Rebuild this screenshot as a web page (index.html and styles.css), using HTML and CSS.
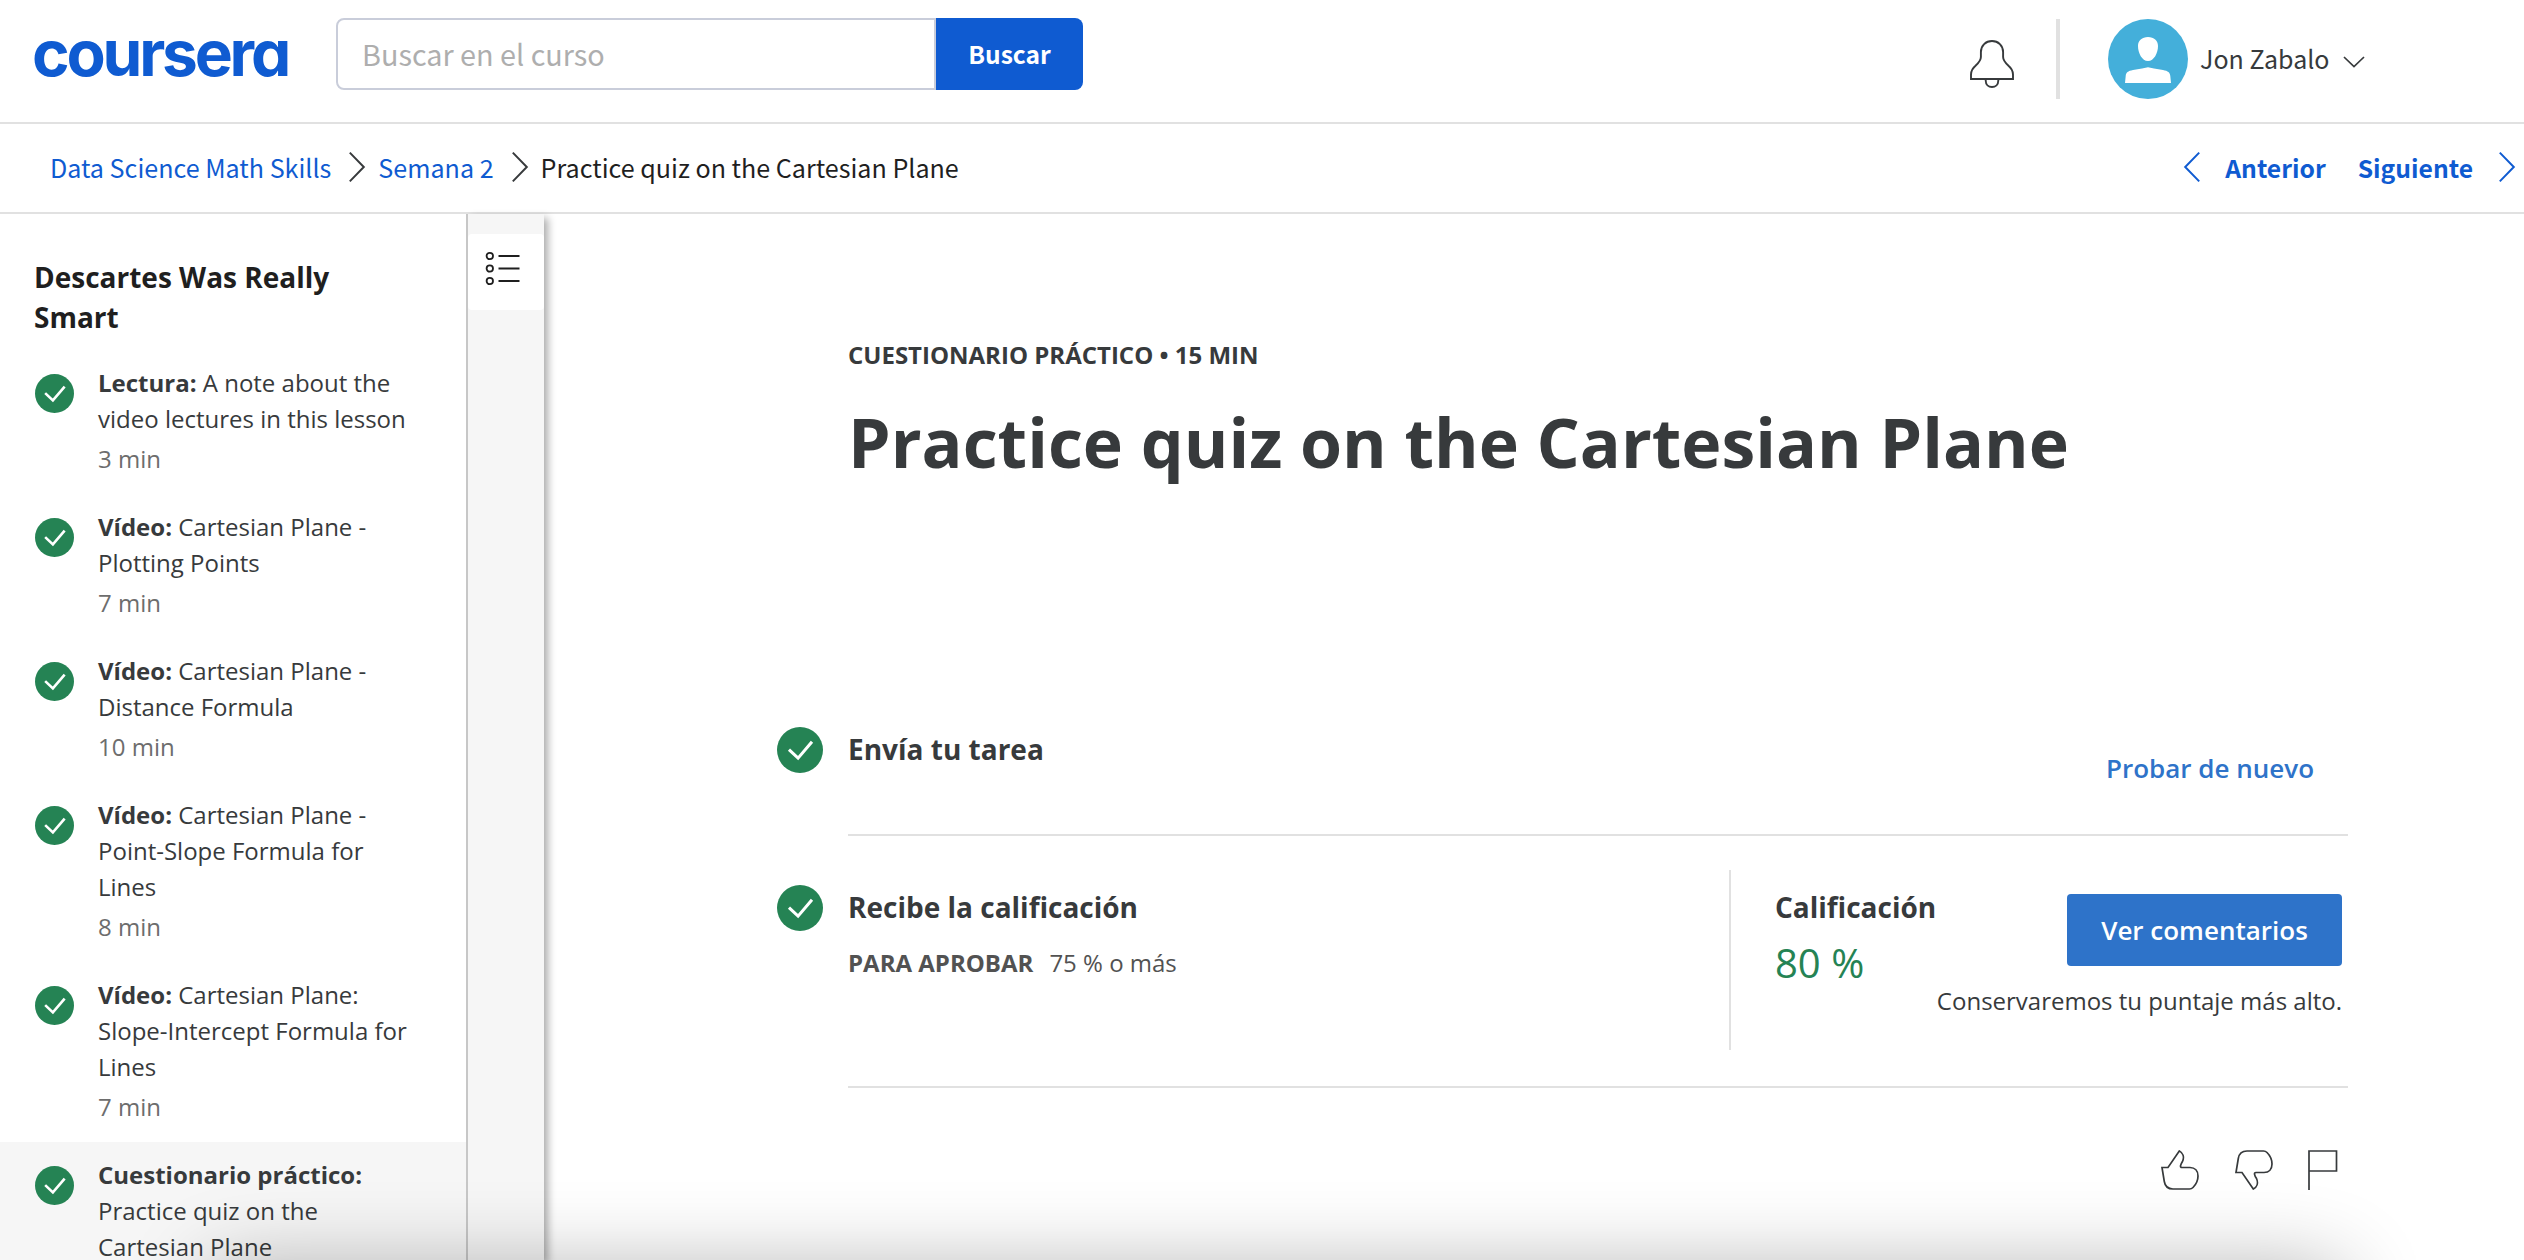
FILE: index.html
```html
<!DOCTYPE html>
<html lang="es">
<head>
<meta charset="utf-8">
<title>Practice quiz on the Cartesian Plane | Coursera</title>
<link rel="stylesheet" href="styles.css">
</head>
<body>
<svg class="defs" aria-hidden="true">
  <symbol id="check" viewBox="0 0 48 48">
    <circle cx="24" cy="24" r="24" fill="#258354"/>
    <path d="M12.500 23.500 L22 32.500 L36.500 15.500" fill="none" stroke="#fff" stroke-width="3.200"/>
  </symbol>
  <symbol id="chevron" viewBox="0 0 18 32">
    <path d="M1.8 1.6 L15.8 16 L1.8 30.4" fill="none" stroke="currentColor" stroke-width="2"/>
  </symbol>
</svg>
<div class="page">
  <header class="header">
    <a class="logo">coursera</a>
    <form class="search">
      <span class="search-input">Buscar en el curso</span>
      <span class="search-button">Buscar</span>
    </form>
    <div class="account">
      <svg class="bell" viewBox="0 0 44 48"><g fill="none" stroke="#373a3c" stroke-width="1.9"><path d="M1 39V34.500C1 30.500 3 28 5.500 25.800C8.500 23 10.900 20.500 10.900 17V12C10.900 5.500 15.800 1 22 1S33.100 5.500 33.100 12V17C33.100 20.500 35.500 23 38.500 25.800C41 28 43 30.500 43 34.500V39Z"/><path d="M15.700 39V40.500C15.700 44.500 18.500 47 22 47S28.300 44.500 28.300 40.500V39"/></g></svg>
      <span class="account-divider"></span>
      <svg class="avatar" viewBox="0 0 80 80"><circle cx="40" cy="40" r="40" fill="#44afda"/><path fill="#fff" d="M40 18c6 0 10 3.500 10 9 0 7-4 15-10 15s-10-8-10-15c0-5.500 4-9 10-9zM34 49.500l6-1.200 6 1.200 9 1.500c5 1 7 2.500 7.300 6l.7 7H17l.7-7c.3-3.500 2.300-5 7.300-6z"/></svg>
      <span class="user">Jon Zabalo</span>
      <svg class="caret" viewBox="0 0 22 12"><path d="M1 1l10 9.500L21 1" fill="none" stroke="#373a3c" stroke-width="1.700"/></svg>
    </div>
  </header>
  <nav class="crumbs">
    <a class="link">Data Science Math Skills</a>
    <svg class="chev"><use href="#chevron"/></svg>
    <a class="link">Semana 2</a>
    <svg class="chev"><use href="#chevron"/></svg>
    <span>Practice quiz on the Cartesian Plane</span>
    <div class="pager">
      <svg class="chev flip"><use href="#chevron"/></svg>
      <a class="prev">Anterior</a>
      <a class="next">Siguiente</a>
      <svg class="chev"><use href="#chevron"/></svg>
    </div>
  </nav>
  <div class="body">
    <aside class="sidebar">
      <h2 class="lesson">Descartes Was Really Smart</h2>
      <ul class="items">
        <li class="item"><svg class="done"><use href="#check"/></svg><div><p><b>Lectura:</b> A note about the video lectures in this lesson</p><p class="time">3 min</p></div></li>
        <li class="item"><svg class="done"><use href="#check"/></svg><div><p><b>Vídeo:</b> Cartesian Plane - Plotting Points</p><p class="time">7 min</p></div></li>
        <li class="item"><svg class="done"><use href="#check"/></svg><div><p><b>Vídeo:</b> Cartesian Plane - Distance Formula</p><p class="time">10 min</p></div></li>
        <li class="item"><svg class="done"><use href="#check"/></svg><div><p><b>Vídeo:</b> Cartesian Plane - Point-Slope Formula for Lines</p><p class="time">8 min</p></div></li>
        <li class="item"><svg class="done"><use href="#check"/></svg><div><p><b>Vídeo:</b> Cartesian Plane: Slope-Intercept Formula for Lines</p><p class="time">7 min</p></div></li>
        <li class="item current"><svg class="done"><use href="#check"/></svg><div><p><b>Cuestionario práctico:</b> Practice quiz on the Cartesian Plane</p></div></li>
      </ul>
    </aside>
    <div class="rail">
      <div class="rail-tab"><svg class="list-icon" viewBox="0 0 36 36"><g fill="none" stroke="#1f1f1f" stroke-width="1.800"><circle cx="4.800" cy="5" r="3.200"/><circle cx="4.800" cy="17.500" r="3.200"/><circle cx="4.800" cy="30" r="3.200"/><path d="M13.500 5h21M13.500 17.500h21M13.500 30h21"/></g></svg></div>
    </div>
    <main class="main">
      <p class="eyebrow">CUESTIONARIO PRÁCTICO • 15 MIN</p>
      <h1 class="title">Practice quiz on the Cartesian Plane</h1>
      <section class="step submit">
        <svg class="step-icon"><use href="#check"/></svg>
        <h3 class="step-title">Envía tu tarea</h3>
        <a class="retry">Probar de nuevo</a>
      </section>
      <section class="step grade">
        <svg class="step-icon"><use href="#check"/></svg>
        <div class="requirement">
          <h3 class="step-title">Recibe la calificación</h3>
          <p class="pass"><b>PARA APROBAR</b><span>75 % o más</span></p>
        </div>
        <div class="result">
          <div class="score">
            <h3 class="step-title">Calificación</h3>
            <p class="percent">80 %</p>
          </div>
          <div class="feedback">
            <a class="button">Ver comentarios</a>
            <p class="note">Conservaremos tu puntaje más alto.</p>
          </div>
        </div>
      </section>
      <div class="reactions">
        <svg class="thumb" viewBox="0 0 38 40"><path d="M1 17.500H7L18.300 1C22 3 23.500 7 21.500 11.500C19.500 14.500 18.500 17.500 21 17.500H29C34 17.500 37 21 37 26C37 31 34.500 35 32 37.500C31 38.500 30 39 28.500 39H12C7 39 4 36 3.300 31.500Z" fill="none" stroke="#373a3c" stroke-width="1.700"/></svg>
        <svg class="thumb" viewBox="0 0 38 40"><path d="M1 22.500H7L18.300 39C22 37 23.500 33 21.500 28.500C19.500 25.500 18.500 22.500 21 22.500H29C34 22.500 37 19 37 14C37 9 34.500 5 32 2.500C31 1.500 30 1 28.500 1H12C7 1 4 4 3.300 8.500Z" fill="none" stroke="#373a3c" stroke-width="1.700"/></svg>
        <svg class="flag" viewBox="0 0 30 40"><path d="M1 40V1H28.500V21H1" fill="none" stroke="#373a3c" stroke-width="1.700"/></svg>
      </div>
    </main>
  </div>
  <div class="bottom-shade"></div>
</div>
</body>
</html>
```
FILE: styles.css
```css
* { box-sizing: border-box; }
body { margin: 0; background: #fff; color: #373a3c; font-family: "Open Sans", sans-serif; font-size: 24px; line-height: 36px; }
h1, h2, h3, p, ul { margin: 0; padding: 0; }
svg { display: block; flex: none; }
.defs { position: absolute; width: 0; height: 0; }
.page { position: relative; width: 2524px; height: 1260px; overflow: hidden; display: flex; flex-direction: column; }

/* Top bar */
.header { height: 124px; flex: none; display: flex; align-items: flex-start; padding-left: 32px; border-bottom: 2px solid #e1e1e1; font-family: "Noto Sans CJK SC", sans-serif; }
.logo { width: 304px; padding-top: 17px; font: 700 64px/72px Inter, sans-serif; font-feature-settings: "cv11"; letter-spacing: -3.2px; color: #0f5bd1; }
.search { display: flex; margin-top: 18px; height: 72px; }
.search-input { width: 600px; border: 2px solid #c9cdda; border-radius: 8px 0 0 8px; padding-left: 24px; font-size: 28.8px; line-height: 68px; color: #aeaeae; }
.search-button { width: 147px; border-radius: 0 8px 8px 0; background: #0f5bd1; color: #fff; font-weight: 700; font-size: 24.6px; line-height: 71px; text-align: center; }
.account { margin-left: auto; padding: 19px 159px 0 0; display: flex; align-items: flex-start; }
.bell { width: 44px; height: 48px; margin: 21px 42px 0 0; }
.account-divider { width: 4px; height: 80px; background: #e1e1e1; margin-right: 48px; }
.avatar { width: 80px; height: 80px; }
.user { margin-left: 12px; width: 143px; font-size: 25px; line-height: 78px; }
.caret { width: 22px; height: 12px; margin: 37px 0 0 0; }

/* Breadcrumbs */
.crumbs { height: 90px; flex: none; display: flex; align-items: center; padding: 0 8px 2px 50px; border-bottom: 2px solid #e1e1e1; font: 25.100px/36px "Noto Sans CJK SC", sans-serif; color: #1f1f1f; }
.link, .prev, .next, .pager { color: #0f5bd1; }
.chev { width: 18px; height: 32px; color: #373a3c; margin: 0 12px 0 17px; }
.pager { margin-left: auto; display: flex; align-items: center; font-weight: 700; font-size: 24.700px; }
.pager .chev { color: inherit; margin: 0 0 0 25px; }
.pager .flip { transform: scaleX(-1); margin: 0 24px 0 0; }
.next { margin-left: 32px; }

.body { flex: 1; min-height: 0; display: flex; }

/* Lesson list */
.sidebar { width: 468px; flex: none; border-right: 2px solid #c7c7c7; overflow: hidden; }
.lesson { margin: 43px 90px 0 34px; font-size: 28px; line-height: 40px; font-weight: 700; color: #1f1f1f; }
.items { list-style: none; margin-top: 13px; }
.item { display: flex; gap: 24px; padding: 15px 40px 17px 35px; }
.item .done { width: 39px; height: 39px; margin-top: 9px; }
.item > div { width: 330px; }
.time { margin-top: 4px; color: #6d6d6d; }
.current { background: #f6f6f6; height: 200px; }

/* Collapsed tool rail */
.rail { width: 76px; flex: none; background: #f6f6f6; padding-top: 20px; box-shadow: 4px 4px 8px rgba(0, 0, 0, .33); clip-path: inset(-6px -30px 0 0); }
.rail-tab { height: 76px; background: #fff; border-radius: 4px; padding: 17px 0 0 17px; }
.list-icon { width: 36px; height: 36px; }

/* Quiz summary */
.main { width: 1570px; margin-left: 234px; padding: 123px 0 0 70px; }
.eyebrow { font-weight: 700; }
.title { margin-top: 25px; font-size: 68px; line-height: 88px; font-weight: 700; white-space: nowrap; }
.step { position: relative; display: flex; border-bottom: 2px solid #e1e1e1; }
.step-icon { position: absolute; left: -71px; width: 46px; height: 46px; }
.step-title { font-size: 28px; line-height: 40px; font-weight: 700; }
.submit { margin-top: 243px; height: 107px; justify-content: space-between; }
.submit .step-icon { top: -2px; }
.retry { margin: 21px 34px 0 0; font-size: 26px; font-weight: 600; color: #2e73c9; }
.grade { height: 252px; padding-top: 34px; }
.grade .step-icon { top: 49px; }
.requirement { width: 881px; padding-top: 17px; }
.pass { margin-top: 18px; color: #525252; display: flex; gap: 16px; }
.result { display: flex; flex: 1; height: 180px; border-left: 2px solid #e1e1e1; padding: 17px 6px 0 44px; }
.percent { margin-top: 8px; font-size: 40px; line-height: 56px; color: #258354; white-space: nowrap; }
.score { width: 160px; }
.feedback { flex: 1; display: flex; flex-direction: column; align-items: flex-end; padding-top: 7px; }
.button { width: 275px; height: 72px; border-radius: 4px; background: #2e73c9; color: #fff; font-size: 26px; font-weight: 600; line-height: 72px; text-align: center; }
.note { margin-top: 17px; white-space: nowrap; }
.reactions { display: flex; margin: 62px 0 0 1313px; }
.thumb { width: 38px; height: 40px; margin-right: 36px; }
.flag { width: 30px; height: 40px; margin-left: -1px; }

/* Soft shade cast along the window's lower edge */
.bottom-shade { position: absolute; left: 210px; top: 1270px; width: 2130px; height: 100px; box-shadow: 0 0 84px rgba(0, 0, 0, .32); }
```
